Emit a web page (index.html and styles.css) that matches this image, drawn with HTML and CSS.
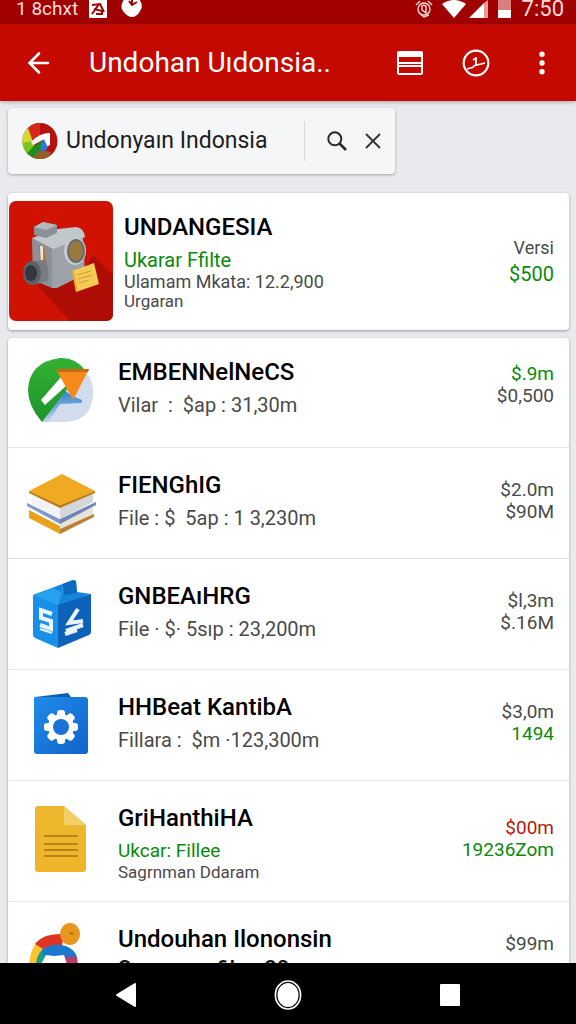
FILE: index.html
```html
<!DOCTYPE html>
<html lang="id">
<head>
  <meta charset="UTF-8" />
  <meta name="viewport" content="width=device-width, initial-scale=1.0" />
  <title>Undohan Uıdonsia</title>
  <link rel="stylesheet" href="styles.css">
</head>
<body>
  <div class="status-bar">
    <span>1 8chxt</span>
    <svg class="st-app" width="18" height="18" viewBox="0 0 18 18"><path fill="#fff" d="M0 0h18v18H0z"/><path d="M3 5l8-1 4 8M3 14l7-10M5 9l8 2v3H7" fill="none" stroke="#a00000" stroke-width="2"/></svg>
    <svg class="st-ball" width="21" height="20" viewBox="0 0 21 20"><path fill="#fff" d="M3 0h15c3 4 4 8 1 12-2 4-5 6-8 6s-6-2-9-6C-1 8 1 4 3 0z"/><path d="M8 2l3 4 5-3M11 6V1" fill="none" stroke="#a00000" stroke-width="2"/></svg>
    <div class="status-right">
      <svg width="18" height="18" viewBox="0 0 18 18" fill="none" stroke="#ffdcd8" stroke-width="1.4"><circle cx="9" cy="9" r="6"/><path d="M1 5l4-4M13 1l4 4M7 5v5l4 3V6L8 5M4 13l5 4 5-2"/></svg>
      <svg class="st-wifi" width="24" height="18" viewBox="0 0 24 18"><path fill="#fff" d="M0 4Q12-4 24 4L12 18z"/></svg>
      <svg width="20" height="18" viewBox="0 0 20 18"><path fill="#fff" d="M0 18L15 3v15z"/><path fill="#e79a96" d="M15 3l4-3v18h-4z"/></svg>
      <svg class="st-batt" width="13" height="18" viewBox="0 0 13 18"><path fill="#d9807c" d="M0 0h13v10H0z"/><path fill="#fff" d="M0 10h13v8H0z"/></svg>
      <span class="time">7:50</span>
    </div>
  </div>

  <header class="app-bar">
    <button type="button" class="icon-btn" aria-label="Kembali">
      <svg width="24" height="24" viewBox="0 0 24 24" fill="none" stroke="#fff" stroke-width="2.6" stroke-linecap="round"><path d="M21 12H3M12 2.500L2.500 12l9.500 9.500"/></svg>
    </button>
    <h1>Undohan Uıdonsia..</h1>
    <button type="button" class="icon-btn" aria-label="Tampilan">
      <svg width="28" height="28" viewBox="0 0 28 28"><path fill="#fff" d="M3 2h22q2 0 2 2v4H1V4q0-2 2-2z"/><path fill="none" stroke="#fff" stroke-width="2" d="M2 7v17q0 1 1 1h22q1 0 1-1V7M2 14h24M3 17h22"/></svg>
    </button>
    <button type="button" class="icon-btn" aria-label="Riwayat">
      <svg width="28" height="28" viewBox="0 0 28 28" fill="none" stroke="#fff" stroke-width="2.2"><circle cx="14" cy="14" r="12.3"/><path d="M5 20l7-2M11 17l12-3M14 8v8M11 11l3-2" stroke-width="1.8"/></svg>
    </button>
    <button type="button" class="icon-btn more" aria-label="Menu">
      <svg width="8" height="24" viewBox="0 0 8 24" fill="#fff"><circle cx="4" cy="3.3" r="2.7"/><circle cx="4" cy="12" r="2.7"/><circle cx="4" cy="20.7" r="2.7"/></svg>
    </button>
  </header>

  <main>
    <form class="search">
      <svg width="36" height="36" viewBox="0 0 36 36">
        <defs><clipPath id="ball"><ellipse cx="18" cy="18" rx="17.5" ry="18"/></clipPath></defs>
        <g clip-path="url(#ball)">
          <path fill="#b5110f" d="M0 0h36v36H0z"/>
          <path fill="#d8281c" d="M5 0h13v14l-8 6z"/>
          <path fill="#d3dc2e" d="M0 6l6-1 5 14L2 29H0z"/>
          <path fill="#7cc41f" d="M0 20l11-2 2 4L4 32H0z"/>
          <path fill="#935f2c" d="M8 36l9-9 12 2-3 7z"/>
          <path fill="#fff" d="M9 19q8-9 19-9v12l-4 2-3-7-10 5z"/>
          <path fill="#2b78df" d="M17 22l5-6 4 9-3 3-6-1z"/>
          <path fill="#179126" d="M4 31l16-14-1 8-9 11z"/>
        </g>
      </svg>
      <input type="text" aria-label="Cari" value="Undonyaın Indonsia">
      <button type="submit" class="icon-btn" aria-label="Cari">
        <svg width="20" height="20" viewBox="0 0 20 20" fill="none" stroke="#2a2a2a" stroke-width="2"><circle cx="7.8" cy="7.8" r="6.5"/><path d="M12.5 12.5l6.5 6.5" stroke-width="2.6"/></svg>
      </button>
      <button type="reset" class="icon-btn" aria-label="Hapus">
        <svg width="16" height="16" viewBox="0 0 16 16" stroke="#333" stroke-width="1.8"><path d="M1 1l14 14M15 1L1 15"/></svg>
      </button>
    </form>

    <article class="card featured">
      <svg class="cover" width="104" height="120" viewBox="0 0 104 120">
        <rect width="104" height="120" rx="7" fill="#d01203"/>
        <path fill="#ad0d04" d="M84 54l20 20v39q0 7-7 7H61L28 84l46-14z"/>
        <path fill="#8d9197" d="M23 37l20 9v41l-19-8z"/>
        <path fill="#9da2a8" d="M43 46l31-11 2 38-28 14h-5z"/>
        <path fill="#c2c7cc" d="M23 37l26-9 18-2q8 1 9 10L44 48z"/>
        <path fill="#8b9097" d="M25 26l9-5 14 3v8l-11 5-12-3z"/>
        <path fill="#b4b9bf" d="M25 26l9-5 14 3-11 5z"/>
        <path fill="#b77c36" d="M30 44h5l3 21h-7z"/><path fill="#e6e8ea" d="M31 45h3v17h-2z"/>
        <ellipse cx="66" cy="50" rx="11" ry="14" fill="#c4cad0"/>
        <ellipse cx="67" cy="50" rx="9" ry="12" fill="#666b74"/>
        <ellipse cx="67" cy="50" rx="7" ry="10" fill="#9a793f"/>
        <path fill="#777b82" d="M22 60l14-1q5 8 3 21l-16 4z"/>
        <ellipse cx="23" cy="72" rx="9" ry="12" fill="#5c6067"/>
        <ellipse cx="22" cy="72" rx="6" ry="8" fill="#34373d"/>
        <path fill="#f6ca55" d="M63 70l22-8 5 21-23 8z"/>
        <path fill="#e2ac36" d="M63 70l4 21 2 0-4-21z"/>
        <path stroke="#c99b34" stroke-width="1" d="M68 74l14-4M69 78l14-4M70 82l10-3"/>
      </svg>
      <div class="info">
        <h2>UNDANGESIA</h2>
        <p class="green">Ukarar Ffilte</p>
        <p class="small">Ulamam Mkata: 12.2,900</p>
        <p class="last">Urgaran</p>
      </div>
      <div class="side">
        <span class="label">Versi</span>
        <span class="green">$500</span>
      </div>
    </article>

    <ul class="card list">
      <li>
        <svg width="66" height="68" viewBox="0 0 66 68">
          <defs>
            <linearGradient id="gr" x2="0" y2="1"><stop offset="0" stop-color="#35b135"/><stop offset="1" stop-color="#1c9428"/></linearGradient>
            <linearGradient id="sh" x1="0" y1="0" x2="0" y2="1"><stop offset="0" stop-color="#2f82c8"/><stop offset=".5" stop-color="#6fa9dc"/><stop offset="1" stop-color="#c3d3ec"/></linearGradient>
          </defs>
          <path fill="#d3dcee" d="M54 14q11 6 11 22 0 30-30 30H14l25-40z"/>
          <path fill="url(#sh)" d="M14 66l22-32 8 6 10 4v3l-22 1-12 18z"/>
          <path fill="url(#gr)" d="M14 66Q0 50 0 34 1 6 32 2q15-1 25 12L40 32z"/>
          <path fill="#fff" d="M13 44l20-23 5 9-21 19z"/>
          <path fill="#f58a1a" d="M28 13h33L45 44z"/>
          <path fill="#cf6910" d="M28 13h33l-1 3H30z"/>
        </svg>
        <div class="info">
          <h2>EMBENNelNeCS</h2>
          <p>Vilar &nbsp;: &nbsp;$ap : 31,30m</p>
        </div>
        <div class="side">
          <span class="green">$.9m</span>
          <span>$0,500</span>
        </div>
      </li>
      <li>
        <svg width="66" height="68" viewBox="0 0 66 68">
          <path fill="#e8a21c" d="M1 41l31 16v8L1 49z"/>
          <path fill="#e9e2d8" d="M32 52l33-14v8L32 60z"/>
          <path fill="#b98135" d="M32 60l34-15v3L32 65z"/>
          <path fill="#8099cb" d="M-1 34l33 16v5L-1 37z"/>
          <path fill="#6e86b5" d="M32 50l36-17v3L32 55z"/>
          <path fill="#f3f3f5" d="M4 25l28 13v12L4 36z"/>
          <path fill="#d5d6da" d="M32 38l33-15v10L32 50z"/>
          <path fill="#f0aa22" d="M34 5l33 17-35 14L1 22z"/>
          <path fill="#c27d10" d="M1 22l31 14 35-14v2L32 39 1 24z"/>
        </svg>
        <div class="info">
          <h2>FIENGhIG</h2>
          <p>File : $ &nbsp;5ap : 1 3,230m</p>
        </div>
        <div class="side">
          <span>$2.0m</span>
          <span>$90M</span>
        </div>
      </li>
      <li>
        <svg width="66" height="68" viewBox="0 0 66 68">
          <path fill="#1785dc" d="M5 15L45 0l3 1 1 11 14 2-33 12z"/>
          <path fill="#28a0f0" d="M5 15l20-7 10 5 0-9-2 12-3 10z"/>
          <path fill="#0d69bd" d="M35 4L45 0l3 1 1 12-13 2z"/>
          <path fill="#1890ea" d="M5 15l25 10v43L7 58q-2-1-2-3z"/>
          <path fill="#0b62b8" d="M30 25l33-11v38q0 2-2 3L30 68z"/>
          <path fill="none" stroke="#eaf5ff" stroke-width="4" d="M24 34l-11-4v8l10 3v8l-11-4"/>
          <path stroke="#eaf5ff" stroke-width="2" d="M12 49l12 4"/>
          <path fill="none" stroke="#eaf5ff" stroke-width="4" d="M50 29L41 43l14-2M38 51l17-6M37 54l12-4"/>
        </svg>
        <div class="info">
          <h2>GNBEAıHRG</h2>
          <p>File · $· 5sıp : 23,200m</p>
        </div>
        <div class="side">
          <span>$l,3m</span>
          <span>$.16M</span>
        </div>
      </li>
      <li>
        <svg width="66" height="68" viewBox="0 0 66 68">
          <defs><linearGradient id="bl" x2="1" y2="1"><stop offset="0" stop-color="#1f8cea"/><stop offset="1" stop-color="#1263c8"/></linearGradient></defs>
          <path fill="#0e5fae" d="M6 8l1-2 33-4 3 4v4H6z"/>
          <rect x="6" y="6" width="54" height="57" rx="3" fill="url(#bl)"/>
          <g transform="translate(33 36)" fill="#fff">
            <circle r="13"/>
            <g id="teeth"><rect x="-4" y="-17" width="8" height="34" rx="3"/><rect x="-17" y="-4" width="34" height="8" rx="3"/></g>
            <use href="#teeth" transform="rotate(45)"/>
            <circle r="8" fill="#1973d8"/>
          </g>
        </svg>
        <div class="info">
          <h2>HHBeat KantibA</h2>
          <p>Fillara : &nbsp;$m ·123,300m</p>
        </div>
        <div class="side">
          <span>$3,0m</span>
          <span class="green">1494</span>
        </div>
      </li>
      <li>
        <svg width="66" height="68" viewBox="0 0 66 68">
          <defs><linearGradient id="ye" x2="0" y2="1"><stop offset="0" stop-color="#edb72e"/><stop offset="1" stop-color="#f0b429"/></linearGradient></defs>
          <path fill="url(#ye)" d="M10 4h26l22 19v44q0 3-3 3H10q-3 0-3-3V7q0-3 3-3z"/>
          <path fill="#f3cd66" d="M36 4l22 19H38q-2 0-2-2z"/>
          <path stroke="#b9821b" stroke-width="2" d="M16 34h34M16 42h34M16 48h34M16 54h34"/>
        </svg>
        <div class="info">
          <h2>GriHanthiHA</h2>
          <p class="green">Ukcar: Fillee</p>
          <p class="last">Sagrnman Ddaram</p>
        </div>
        <div class="side">
          <span class="red">$00m</span>
          <span class="green">19236Zom</span>
        </div>
      </li>
      <li>
        <svg width="66" height="68" viewBox="0 0 66 68">
          <path fill="#fbc52c" d="M1 41q1-13 8-22l10 6-6 16z"/>
          <path fill="#dd3522" d="M7 21q8-11 29-10l-2 12-14 6z"/>
          <path fill="#16a08c" d="M8 41q1-12 10-17l6 8-8 9z"/>
          <path fill="#1a79cf" d="M14 27q10-8 24-4 9 4 11 11l-13 3-20-4z"/>
          <path fill="#c13a66" d="M36 34h13l1 8H38z"/>
          <path fill="#fff" d="M13 41l5-9 8 1 10-1 3 9z"/>
          <ellipse cx="42" cy="11" rx="10" ry="11" fill="#e8961c"/>
          <path stroke="#a25e09" stroke-width="1.5" d="M42 10l3 1"/>
        </svg>
        <div class="info">
          <h2>Undouhan Ilononsin</h2>
          <p class="dark">Seguman filo : 20</p>
        </div>
        <div class="side">
          <span>$99m</span>
        </div>
      </li>
    </ul>
  </main>

  <nav class="nav-bar">
    <button type="button" class="icon-btn" aria-label="Kembali"><svg width="22" height="26" viewBox="0 0 22 26"><path fill="#fff" stroke="#fff" stroke-width="2" stroke-linejoin="round" d="M20 2v22L2 13z"/></svg></button>
    <button type="button" class="icon-btn" aria-label="Beranda"><svg width="28" height="30" viewBox="0 0 28 30"><ellipse cx="14" cy="15" rx="12.6" ry="14" fill="none" stroke="#fff" stroke-width="1.6"/><ellipse cx="14" cy="15" rx="10.5" ry="12" fill="#fff"/></svg></button>
    <button type="button" class="icon-btn" aria-label="Terbaru"><svg width="22" height="24" viewBox="0 0 22 24"><rect x="1" y="1" width="20" height="22" rx="1" fill="#fff"/></svg></button>
  </nav>
</body>
</html>
```
FILE: styles.css
```css
* {
  box-sizing: border-box;
}
body {
  margin: 0;
  height: 100vh;
  display: flex;
  flex-direction: column;
  overflow: hidden;
  font-family: Roboto, sans-serif;
  background: #e9eaee;
  color: #4a4a4a;
}
h1, h2, p, ul {
  margin: 0;
  padding: 0;
}
svg {
  display: block;
  flex: none;
  overflow: visible;
}
.icon-btn {
  display: flex;
  flex: none;
  padding: 0;
  border: none;
  background: none;
  cursor: pointer;
}

.status-bar {
  flex: none;
  display: flex;
  align-items: center;
  height: 24px;
  padding: 0 12px 6px 16px;
  background: #a00000;
  color: #ffdcd8;
  font-size: 19px;
  line-height: 18px;
}
.st-app {
  margin-left: 11px;
}
.st-ball {
  margin-left: 14px;
}
.status-right {
  display: flex;
  align-items: center;
  margin-left: auto;
}
.st-wifi {
  margin: 0 3px 0 9px;
}
.st-batt {
  margin: 0 11px 0 9px;
}
.time {
  font-size: 22px;
}

.app-bar {
  flex: none;
  display: flex;
  align-items: center;
  gap: 38px;
  height: 77px;
  padding: 0 30px 0 27px;
  background: #c40a00;
  color: #fff;
  box-shadow: 0 1px 4px rgba(0, 0, 0, 0.3);
}
.app-bar h1 {
  flex: 1;
  font-size: 28px;
  font-weight: 400;
  white-space: nowrap;
}
.app-bar .more {
  margin-left: 10px;
}

main {
  flex: 1;
  min-height: 0;
  overflow: hidden;
  padding: 7px 7px 0 8px;
}
.search {
  display: flex;
  align-items: center;
  width: 69%;
  height: 66px;
  margin-bottom: 19px;
  padding: 0 14px;
  background: #f5f6f7;
  border-radius: 4px;
  box-shadow: 0 1px 3px rgba(0, 0, 0, 0.3);
}
.search input {
  flex: 1;
  min-width: 0;
  height: 40px;
  margin-right: 22px;
  padding: 0 0 2px 8px;
  border: none;
  border-right: 1px solid #d8d8da;
  background: none;
  color: #1c1c1c;
  font: 23px Roboto, sans-serif;
}
.search .icon-btn + .icon-btn {
  margin-left: 18px;
}

.card {
  background: #fff;
  border-radius: 4px;
  box-shadow: 0 1px 3px rgba(0, 0, 0, 0.35);
}
.info {
  flex: 1;
  font-size: 20px;
  line-height: 22px;
}
.info h2 {
  margin-bottom: 8px;
  color: #000;
  font-size: 24px;
  font-weight: 500;
  line-height: 28px;
}
.info .small {
  font-size: 18px;
}
.info .last {
  font-size: 17px;
  line-height: 20px;
}
.info .dark {
  color: #111;
  font-size: 22px;
  font-weight: 500;
  line-height: 16px;
}
.side {
  display: flex;
  flex-direction: column;
  font-size: 19px;
  line-height: 22px;
  text-align: right;
}
.green {
  color: #0a8a0a;
}
.red {
  color: #b51a0c;
}

.featured {
  display: flex;
  margin-bottom: 8px;
  padding: 8px 15px 9px 1px;
}
.featured .info {
  padding: 12px 0 0 11px;
}
.featured .last {
  line-height: 16px;
}
.featured .side {
  gap: 4px;
  padding-top: 36px;
  font-size: 20px;
}
.featured .label {
  font-size: 18px;
}

.list {
  list-style: none;
}
.list li {
  display: flex;
  align-items: flex-start;
  min-height: 111px;
  padding: 23px 15px 19px 20px;
  border-bottom: 1px solid #e4e5e7;
}
.list li:first-child {
  min-height: 110px;
  padding: 20px 15px 23px 20px;
}
.list svg {
  margin: -2px 24px 0 0;
}
.list .info .green {
  font-size: 19px;
}
.list .side {
  align-self: center;
  min-height: 52px;
  padding-bottom: 8px;
}
.list li:first-child .side {
  padding-bottom: 12px;
}

.nav-bar {
  flex: none;
  display: flex;
  align-items: center;
  justify-content: space-between;
  height: 61px;
  padding: 3px 20% 0;
  background: #000;
}
```
